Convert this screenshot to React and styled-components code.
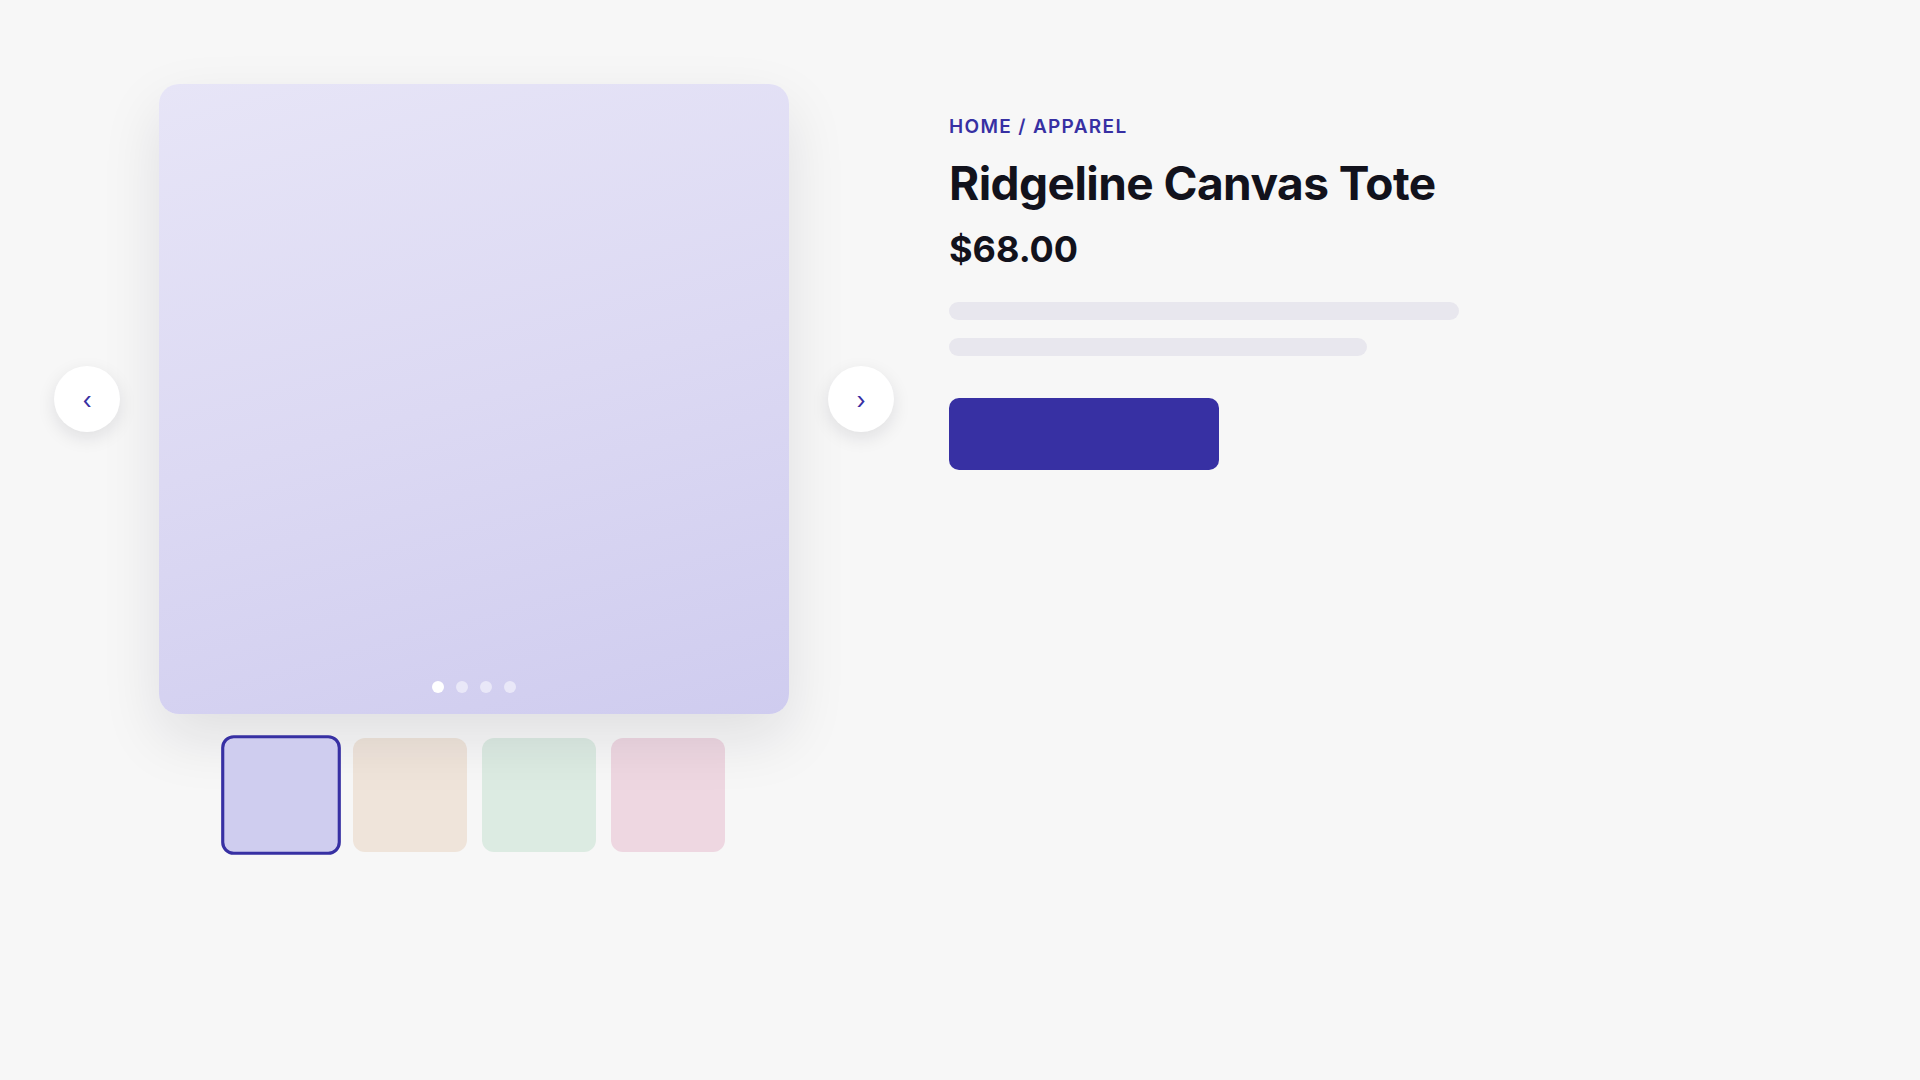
import React, { useState } from "react";
import styled, { createGlobalStyle } from "styled-components";

const GlobalStyle = createGlobalStyle`
  * { box-sizing: border-box; }
  html, body { margin: 0; padding: 0; }
  body {
    background: #f7f7f7;
    font-family: Inter, "Noto Sans", "Liberation Sans", sans-serif;
    color: #12121c;
  }
`;

const Page = styled.main`
  min-height: 100vh;
  padding: 84px 0 0 159px;
  display: flex;
  align-items: flex-start;
  gap: 160px;
`;

const Gallery = styled.section`
  width: 630px;
  display: flex;
  flex-direction: column;
  align-items: center;
  gap: 24px;
`;

const Stage = styled.div`
  position: relative;
  width: 630px;
  height: 630px;
  border-radius: 20px;
  background: linear-gradient(165deg, #e7e5f7 0%, #dcd9f3 50%, #cfccef 100%);
  box-shadow: 0 24px 60px rgba(20, 20, 40, 0.1);
`;

const NavButton = styled.button`
  position: absolute;
  top: 50%;
  ${(p) => (p.$side === "left" ? "left: -105px;" : "right: -105px;")}
  transform: translateY(-50%);
  width: 66px;
  height: 66px;
  border-radius: 50%;
  border: none;
  background: #ffffff;
  box-shadow: 0 6px 18px rgba(20, 20, 40, 0.1);
  color: #3730a3;
  font-family: Inter, sans-serif;
  font-size: 24px;
  font-weight: 400;
  line-height: 1;
  display: flex;
  align-items: center;
  justify-content: center;
  cursor: pointer;
  padding: 4px 0 0;
`;

const Dots = styled.div`
  position: absolute;
  left: 50%;
  bottom: 21px;
  transform: translateX(-50%);
  display: flex;
  gap: 12px;
`;

const Dot = styled.span`
  width: 12px;
  height: 12px;
  border-radius: 50%;
  background: ${(p) => (p.$active ? "#ffffff" : "rgba(255, 255, 255, 0.5)")};
`;

const Thumbs = styled.div`
  display: flex;
  gap: 15px;
`;

const Thumb = styled.button`
  width: 114px;
  height: 114px;
  border-radius: 12px;
  padding: 0;
  background: ${(p) => p.$color};
  border: ${(p) => (p.$active ? "3px solid #3730a3" : "none")};
  transform: ${(p) => (p.$active ? "scale(1.05)" : "none")};
  cursor: pointer;
`;

const Info = styled.section`
  width: 510px;
  padding-top: 31px;
  display: flex;
  flex-direction: column;
`;

const Crumbs = styled.div`
  font-size: 19px;
  line-height: 24px;
  font-weight: 600;
  letter-spacing: 0.07em;
  text-transform: uppercase;
  color: #3730a3;
`;

const Title = styled.h1`
  margin: 17px 0 0;
  font-size: 46px;
  line-height: 1.2;
  font-weight: 700;
  letter-spacing: -0.012em;
  color: #12121c;
`;

const Price = styled.div`
  margin-top: 17px;
  font-size: 36px;
  line-height: 1.2;
  font-weight: 700;
  color: #12121c;
`;

const Lines = styled.div`
  margin-top: 31px;
  display: flex;
  flex-direction: column;
  gap: 18px;
`;

const Line = styled.div`
  height: 18px;
  border-radius: 9px;
  background: #e8e7ee;
  width: ${(p) => p.$width};
`;

const CartButton = styled.button`
  margin-top: 42px;
  width: 270px;
  height: 72px;
  border: none;
  border-radius: 10px;
  background: #3730a3;
  cursor: pointer;
`;

const slides = ["#cfcdef", "#efe4da", "#dcebe2", "#eed7e1"];

export default function App() {
  const [index, setIndex] = useState(0);
  const go = (d) => setIndex((i) => (i + d + slides.length) % slides.length);

  return (
    <>
      <GlobalStyle />
      <Page>
        <Gallery>
          <Stage>
            <NavButton $side="left" aria-label="Previous" onClick={() => go(-1)}>
              ‹
            </NavButton>
            <NavButton $side="right" aria-label="Next" onClick={() => go(1)}>
              ›
            </NavButton>
            <Dots>
              {slides.map((c, i) => (
                <Dot key={c} $active={i === index} />
              ))}
            </Dots>
          </Stage>
          <Thumbs>
            {slides.map((c, i) => (
              <Thumb
                key={c}
                $color={c}
                $active={i === index}
                aria-label={`Slide ${i + 1}`}
                onClick={() => setIndex(i)}
              />
            ))}
          </Thumbs>
        </Gallery>
        <Info>
          <Crumbs>Home / Apparel</Crumbs>
          <Title>Ridgeline Canvas Tote</Title>
          <Price>$68.00</Price>
          <Lines>
            <Line $width="100%" />
            <Line $width="82%" />
          </Lines>
          <CartButton aria-label="Add to cart" />
        </Info>
      </Page>
    </>
  );
}
